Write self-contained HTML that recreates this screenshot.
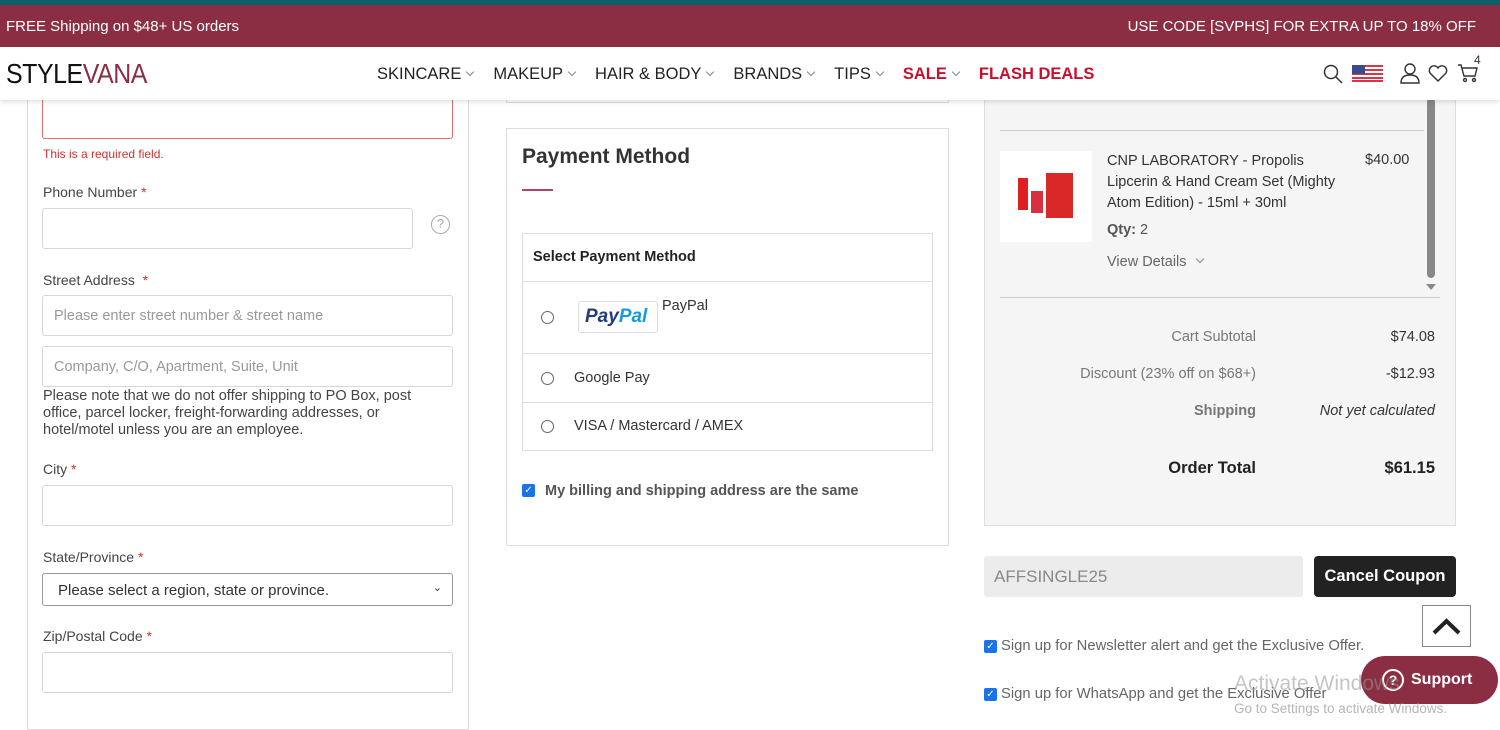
<!DOCTYPE html>
<html><head><meta charset="utf-8"><style>
*{box-sizing:border-box;margin:0;padding:0}
body{width:1500px;height:730px;overflow:hidden;font-family:"Liberation Sans",sans-serif;background:#fff;position:relative;color:#333}
.a{position:absolute}
.lbl{font-size:14px;color:#444}
.req{color:#c0392b}
.inp{position:absolute;border:1px solid #d6d6d6;border-radius:3px;background:#fff;height:41px}
.ph{font-size:14.5px;color:#999;padding:12px 11px}
.nav span{margin-right:20px}
.chev{display:inline-block;width:6px;height:6px;border-right:1px solid #888;border-bottom:1px solid #888;transform:rotate(45deg);margin-left:6px;position:relative;top:-4px}
.radio{position:absolute;width:13px;height:13px;border:1px solid #666;border-radius:50%;background:#fff}
.cb{position:absolute;width:13px;height:13px;background:#1a73e8;border-radius:2px;color:#fff;font-size:10px;line-height:13px;text-align:center}
</style></head><body>
<div class="a" style="left:0;top:0;width:1500px;height:5px;background:#0b5f66"></div>
<div class="a" style="left:0;top:5px;width:1500px;height:42px;background:#8b2e43;color:#fff;font-size:15px">
<span class="a" style="left:6px;top:13px">FREE Shipping on $48+ US orders</span>
<span class="a" style="right:24px;top:13px">USE CODE [SVPHS] FOR EXTRA UP TO 18% OFF</span></div>
<div class="a" style="left:0;top:47px;width:1500px;height:53px;background:#fff;box-shadow:0 2px 4px rgba(0,0,0,.12);z-index:5">
<div class="a" style="left:6px;top:11px;font-size:28px;letter-spacing:-0.5px;color:#111;transform:scaleX(0.89);transform-origin:left">STYLE<span style="color:#8b2e43">VANA</span></div>
<div class="a nav" style="left:377px;top:18px;font-size:16.5px;color:#222;white-space:nowrap">
<span>SKINCARE<i class="chev"></i></span><span>MAKEUP<i class="chev"></i></span><span>HAIR &amp; BODY<i class="chev"></i></span><span>BRANDS<i class="chev"></i></span><span>TIPS<i class="chev"></i></span><span style="color:#c8102e;font-weight:bold">SALE<i class="chev"></i></span><span style="color:#c8102e;font-weight:bold">FLASH DEALS</span></div>
<svg class="a" style="left:1322px;top:16px" width="22" height="22" viewBox="0 0 22 22" fill="none" stroke="#333" stroke-width="1.5"><circle cx="9" cy="9" r="6.5"/><path d="M14 14l6 6"/></svg>
<svg class="a" style="left:1352px;top:18px" width="31" height="17" viewBox="0 0 31 17"><rect width="31" height="17" fill="#fff"/><g fill="#d9344a"><rect y="0" width="31" height="2"/><rect y="4" width="31" height="2"/><rect y="8" width="31" height="2"/><rect y="12" width="31" height="2"/><rect y="15" width="31" height="2"/></g><rect width="13" height="9" fill="#3b4a8a"/></svg>
<svg class="a" style="left:1399px;top:15px" width="22" height="22" viewBox="0 0 22 22" fill="none" stroke="#333" stroke-width="1.4"><circle cx="11" cy="7" r="5"/><path d="M2 21c0-6 4-8 9-8s9 2 9 8z"/></svg>
<svg class="a" style="left:1428px;top:17px" width="20" height="18" viewBox="0 0 20 18" fill="none" stroke="#333" stroke-width="1.4"><path d="M10 17L2 9a4.5 4.5 0 0 1 8-5 4.5 4.5 0 0 1 8 5z"/></svg>
<svg class="a" style="left:1457px;top:16px" width="22" height="20" viewBox="0 0 22 20" fill="none" stroke="#333" stroke-width="1.4"><path d="M1 2h3l3 11h11l2-8H5"/><circle cx="8" cy="17" r="1.5"/><circle cx="17" cy="17" r="1.5"/></svg>
<span class="a" style="left:1474px;top:6px;font-size:12px;color:#333">4</span>
</div>
<!-- left panel -->
<div class="a" style="left:27px;top:90px;width:442px;height:640px;border:1px solid #ddd;border-top:none"></div>
<div class="inp" style="left:42px;top:98px;width:411px;border-color:#e06b6b"></div>
<div class="a" style="left:43px;top:147px;font-size:12px;color:#d0312d">This is a required field.</div>
<div class="a lbl" style="left:43px;top:184px">Phone Number <span class="req">*</span></div>
<div class="inp" style="left:42px;top:208px;width:371px"></div>
<div class="a" style="left:431px;top:215px;width:19px;height:19px;border:1.5px solid #aaa;border-radius:50%;font-size:13px;color:#aaa;text-align:center;line-height:16px">?</div>
<div class="a lbl" style="left:43px;top:272px">Street Address <span class="req">&nbsp;*</span></div>
<div class="inp ph" style="left:42px;top:295px;width:411px">Please enter street number &amp; street name</div>
<div class="inp ph" style="left:42px;top:346px;width:411px">Company, C/O, Apartment, Suite, Unit</div>
<div class="a" style="left:43px;top:388px;width:392px;font-size:14.5px;color:#444;line-height:17px">Please note that we do not offer shipping to PO Box, post office, parcel locker, freight-forwarding addresses, or hotel/motel unless you are an employee.</div>
<div class="a lbl" style="left:43px;top:461px">City <span class="req">*</span></div>
<div class="inp" style="left:42px;top:485px;width:411px"></div>
<div class="a lbl" style="left:43px;top:549px">State/Province <span class="req">*</span></div>
<div class="inp" style="left:42px;top:573px;width:411px;height:33px;border-color:#999;font-size:15px;color:#333;padding:8px 15px">Please select a region, state or province.<span style="position:absolute;right:10px;top:7px;font-size:11px">&#8964;</span></div>
<div class="a lbl" style="left:43px;top:628px">Zip/Postal Code <span class="req">*</span></div>
<div class="inp" style="left:42px;top:652px;width:411px"></div>
<!-- middle -->
<div class="a" style="left:506px;top:90px;width:443px;height:13px;border:1px solid #ddd;border-top:none"></div>
<div class="a" style="left:506px;top:128px;width:443px;height:418px;border:1px solid #ddd"></div>
<div class="a" style="left:522px;top:145px;font-size:21px;font-weight:bold;color:#333">Payment Method</div>
<div class="a" style="left:522px;top:189px;width:31px;height:2px;background:#b04560"></div>
<div class="a" style="left:522px;top:233px;width:411px;height:218px;border:1px solid #ddd"></div>
<div class="a" style="left:533px;top:249px;font-size:14.5px;font-weight:bold;color:#222">Select Payment Method</div>
<div class="a" style="left:523px;top:281px;width:409px;border-top:1px solid #ddd"></div>
<div class="a" style="left:523px;top:353px;width:409px;border-top:1px solid #ddd"></div>
<div class="a" style="left:523px;top:402px;width:409px;border-top:1px solid #ddd"></div>
<div class="radio" style="left:541px;top:311px"></div>
<div class="a" style="left:578px;top:301px;width:80px;height:32px;border:1px solid #ddd;border-radius:3px;font:italic bold 19px 'Liberation Sans',sans-serif;padding:4px 6px;color:#253b80">Pay<span style="color:#179bd7">Pal</span></div>
<div class="a" style="left:662px;top:298px;font-size:14.5px;color:#333">PayPal</div>
<div class="radio" style="left:541px;top:372px"></div>
<div class="a" style="left:574px;top:370px;font-size:14.5px;color:#333">Google Pay</div>
<div class="radio" style="left:541px;top:420px"></div>
<div class="a" style="left:574px;top:418px;font-size:14.5px;color:#333">VISA / Mastercard / AMEX</div>
<div class="cb" style="left:522px;top:484px">✓</div>
<div class="a" style="left:545px;top:483px;font-size:14.5px;font-weight:bold;color:#555">My billing and shipping address are the same</div>
<!-- right -->
<div class="a" style="left:984px;top:90px;width:472px;height:436px;background:#f5f5f5;border:1px solid #ddd;border-top:none"></div>
<div class="a" style="left:1000px;top:130px;width:424px;border-top:1px solid #ccc"></div>
<div class="a" style="left:1427px;top:98px;width:8px;height:180px;background:#888;border-radius:4px"></div>
<div class="a" style="left:1426px;top:284px;width:0;height:0;border-left:5px solid transparent;border-right:5px solid transparent;border-top:6px solid #888"></div>
<div class="a" style="left:1000px;top:151px;width:92px;height:91px;background:#fff">
<div class="a" style="left:18px;top:27px;width:10px;height:32px;background:#e02020"></div>
<div class="a" style="left:31px;top:40px;width:12px;height:22px;background:#d83040"></div>
<div class="a" style="left:46px;top:22px;width:27px;height:45px;background:#d82828"></div></div>
<div class="a" style="left:1107px;top:151px;width:250px;font-size:14.5px;line-height:21px;color:#333">CNP LABORATORY - Propolis Lipcerin &amp; Hand Cream Set (Mighty Atom Edition) - 15ml + 30ml</div>
<div class="a" style="left:1365px;top:152px;font-size:14.5px;color:#333">$40.00</div>
<div class="a" style="left:1107px;top:222px;font-size:14.5px;color:#555"><b>Qty:</b> 2</div>
<div class="a" style="left:1107px;top:254px;font-size:14.5px;color:#666">View Details <i class="chev"></i></div>
<div class="a" style="left:1000px;top:297px;width:440px;border-top:1px solid #ccc"></div>
<div class="a" style="right:244px;top:329px;font-size:14.5px;color:#777">Cart Subtotal</div>
<div class="a" style="right:65px;top:329px;font-size:14.5px;color:#333">$74.08</div>
<div class="a" style="right:244px;top:366px;font-size:14.5px;color:#777">Discount (23% off on $68+)</div>
<div class="a" style="right:65px;top:366px;font-size:14.5px;color:#333">-$12.93</div>
<div class="a" style="right:244px;top:403px;font-size:14.5px;color:#777;font-weight:bold">Shipping</div>
<div class="a" style="right:65px;top:403px;font-size:14.5px;color:#333;font-style:italic">Not yet calculated</div>
<div class="a" style="right:244px;top:459px;font-size:16.5px;color:#222;font-weight:bold">Order Total</div>
<div class="a" style="right:65px;top:459px;font-size:16.5px;color:#222;font-weight:bold">$61.15</div>
<div class="a" style="left:984px;top:556px;width:319px;height:41px;background:#ececec;border-radius:3px;font-size:17px;color:#888;padding:11px 10px">AFFSINGLE25</div>
<div class="a" style="left:1314px;top:556px;width:142px;height:41px;background:#222;border-radius:4px;color:#fff;font-size:16.5px;font-weight:bold;text-align:center;line-height:41px">Cancel Coupon</div>
<div class="a" style="left:1422px;top:605px;width:49px;height:42px;border:1px solid #888;background:#fff"><svg width="47" height="40" viewBox="0 0 47 40"><path d="M11 27l12.5-12 12.5 12" fill="none" stroke="#222" stroke-width="4"/></svg></div>
<div class="cb" style="left:984px;top:640px">✓</div>
<div class="a" style="left:1001px;top:638px;font-size:14.8px;color:#666">Sign up for Newsletter alert and get the Exclusive Offer.</div>
<div class="cb" style="left:984px;top:688px">✓</div>
<div class="a" style="left:1001px;top:686px;font-size:14.8px;color:#666">Sign up for WhatsApp and get the Exclusive Offer</div>
<div class="a" style="left:1361px;top:656px;width:137px;height:48px;background:#8b2e43;border-radius:24px;color:#fff;font-size:16px;font-weight:bold;line-height:48px;padding-left:50px">Support</div>
<div class="a" style="left:1382px;top:669px;width:22px;height:22px;border:2px solid #fff;border-radius:50%;color:#fff;font-size:14px;font-weight:bold;text-align:center;line-height:18px">?</div>
<div class="a" style="left:1234px;top:672px;font-size:21px;color:rgba(150,150,150,.55)">Activate Windows</div>
<div class="a" style="left:1234px;top:701px;font-size:13.5px;color:rgba(150,150,150,.7)">Go to Settings to activate Windows.</div>
</body></html>
